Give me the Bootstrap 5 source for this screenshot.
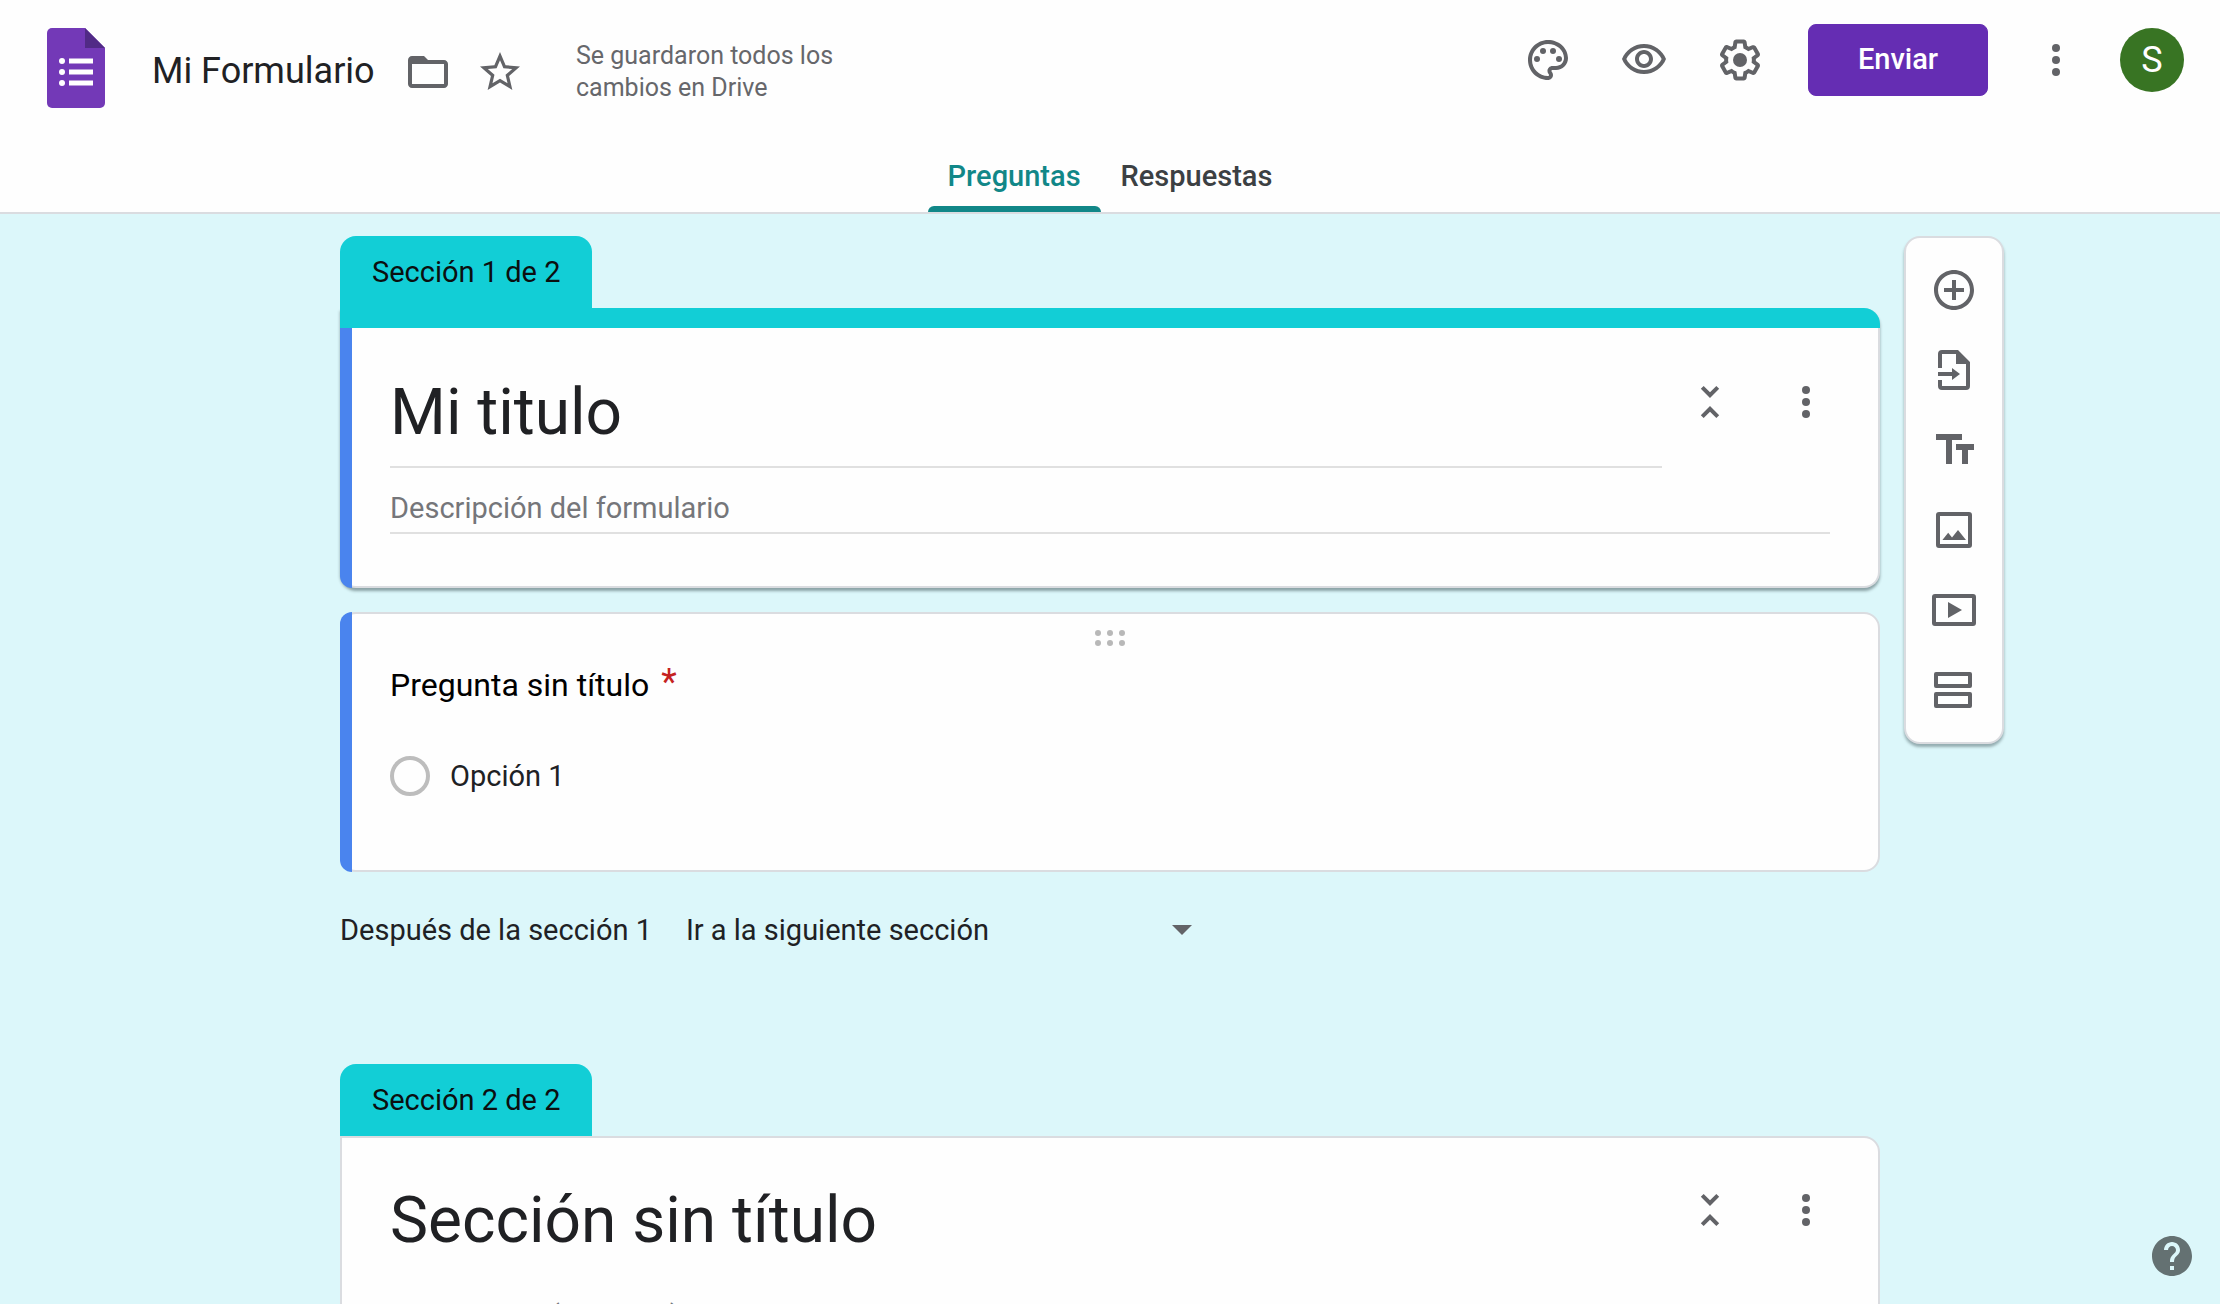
<!DOCTYPE html>
<html lang="es">
<head>
<meta charset="utf-8">
<meta name="viewport" content="width=device-width, initial-scale=1">
<title>Mi Formulario</title>
<link href="https://cdn.jsdelivr.net/npm/bootstrap@5.3.0/dist/css/bootstrap.min.css" rel="stylesheet">
<style>
  :root { --ink: #202124; --icon: #626367; --theme: #12ced6; --line: #dadce0; --active: #4a84ee; }
  body { font: 400 29px/40px Roboto, "Liberation Sans", sans-serif; color: var(--ink); background: #dcf7fa; }
  svg { display: block; flex: none; fill: currentColor; }
  .icon { width: 48px; height: 48px; }
  .icon-btn { width: 96px; color: var(--icon); background: none; border: 0; padding: 0; display: flex; align-items: center; justify-content: center; }
  .plain-field { display: block; border: 0; border-bottom: 2px solid transparent; border-radius: 0; background: none; padding: 0; color: inherit; min-width: 0; }
  .plain-field:focus { outline: 0; }

  .app-header { background: #fefefe; border-bottom: 2px solid var(--line); }
  .top-row { height: 140px; padding-left: 47px; padding-right: 36px; }
  .brand-group { padding-top: 28px; }
  .doc-group { height: 88px; margin-left: 47px; gap: 24px; }
  .doc-name { width: 228px; font-size: 36px; line-height: 44px; }
  .doc-group .icon-btn { width: 48px; }
  .save-note { max-width: 290px; font-size: 25px; line-height: 32px; color: #66676b; margin-left: 28px; }
  .tool-group { height: 72px; margin-top: 24px; }
  .btn-send { width: 180px; height: 72px; margin: 0 20px; border-radius: 8px; font-size: 29px; font-weight: 500; --bs-btn-bg: #652db3; --bs-btn-color: #fff; --bs-btn-border-color: #652db3; --bs-btn-hover-bg: #5a27a2; --bs-btn-hover-color: #fff; }
  .avatar { width: 64px; height: 64px; margin-left: 16px; border: 0; background: #387423; color: #fff; font-size: 36px; }
  .form-tabs .nav-link { position: relative; padding: 0 20px; line-height: 72px; font-weight: 500; color: #3c4043; }
  .form-tabs .nav-link.active { color: #118788; }
  .form-tabs .nav-link.active::after { content: ""; position: absolute; inset: auto 0 0; height: 6px; border-radius: 6px 6px 0 0; background: #118788; }

  .workspace { display: grid; grid-template-columns: minmax(0, 1fr) minmax(0, 1540px) minmax(148px, 1fr); padding-top: 22px; align-items: start; scrollbar-width: none; }
  .form-col { grid-column: 2; }
  .section-tag { display: inline-block; vertical-align: top; padding: 16px 32px; background: var(--theme); color: #0b0f10; border-radius: 16px 16px 0 0; }
  .panel { position: relative; background: #fefefe; border: 2px solid var(--line); border-radius: 16px; padding-left: 48px; }
  .panel-tagged { border-top-left-radius: 0; }
  .panel-themed { border-top: 0; box-shadow: 0 3px 3px rgba(40, 60, 65, .45); border-top-right-radius: 16px; padding-bottom: 52px; }
  .theme-bar { height: 20px; margin: 0 -2px 0 -50px; background: var(--theme); border-radius: 0 16px 0 0; }
  .panel-active::before { content: ""; position: absolute; left: -2px; top: -2px; bottom: -2px; width: 12px; background: var(--active); border-radius: 16px 0 0 16px; }
  .panel-themed.panel-active::before { top: 20px; border-radius: 0 0 0 16px; }
  .title-row { padding: 40px 24px 0 0; }
  .panel-plain .title-row { padding-top: 38px; }
  .title-row .icon-btn { height: 68px; }
  .form-title { font-size: 64px; line-height: 88px; height: 100px; padding-bottom: 10px; }
  .description-row { padding: 20px 48px 0 0; }
  .form-description { height: 46px; padding-bottom: 4px; }
  .form-description::placeholder { color: #75767a; opacity: 1; }
  .ruled { border-bottom-color: #e0e0e0; }
  .question { margin-top: 24px; padding-bottom: 74px; }
  .grip-row { margin-left: -48px; padding-top: 16px; }
  .grip { width: 30px; height: 16px; color: #b8b8b8; }
  .question-title { font-size: 32px; line-height: 44px; color: #000; margin: 17px 0 0; }
  .required { color: #c5221f; margin-left: 12px; font-size: 36px; line-height: 1; vertical-align: 2px; }
  .option { margin-top: 49px; gap: 20px; }
  .option .form-check-input { width: 40px; height: 40px; margin: 0; border: 4px solid #bdbdbd; background-color: transparent; }
  .after-row { margin: 30px 0 106px; gap: 34px; }
  .after-row .form-select { width: 530px; height: 56px; font-size: 29px; line-height: 40px; padding: 0 60px 0 0; border: 0; color: inherit; background-color: transparent; background-size: 20px 10px; background-position: right 24px center;
    background-image: url("data:image/svg+xml,%3csvg xmlns='http://www.w3.org/2000/svg' viewBox='0 0 20 10'%3e%3cpath fill='%23626367' d='M0 0h20L10 10z'/%3e%3c/svg%3e"); }
  .side-tools { width: 100px; margin-left: 24px; padding: 12px 0; background: #fefefe; border: 2px solid var(--line); border-radius: 16px; box-shadow: 0 3px 3px rgba(40, 60, 65, .4); }
  .side-tools .icon-btn { height: 80px; }
  .help-btn { position: fixed; right: 24px; bottom: 24px; width: 48px; color: #647172; }
</style>
<script src="https://cdn.jsdelivr.net/npm/bootstrap@5.3.0/dist/js/bootstrap.bundle.min.js" defer></script>
</head>
<body class="vh-100 d-flex flex-column overflow-hidden">

<svg class="d-none" aria-hidden="true">
  <symbol id="i-more" viewBox="0 0 24 24"><circle cx="12" cy="6" r="2"/><circle cx="12" cy="12" r="2"/><circle cx="12" cy="18" r="2"/></symbol>
  <symbol id="i-fold" viewBox="0 0 24 24"><path d="M7.41 18.59L8.83 20 12 16.83 15.17 20l1.41-1.41L12 14l-4.59 4.59zm9.18-13.18L15.17 4 12 7.17 8.83 4 7.41 5.41 12 10l4.59-4.59z"/></symbol>
</svg>

<header class="app-header flex-shrink-0">
  <div class="top-row d-flex align-items-start justify-content-between">
    <div class="brand-group d-flex align-items-start">
      <a href="#" aria-label="Formularios">
        <svg width="58" height="80" viewBox="0 0 58 80">
          <path fill="#7339b7" d="M5 0h33l20 20v55a5 5 0 0 1-5 5H5a5 5 0 0 1-5-5V5a5 5 0 0 1 5-5z"/>
          <path fill="#512a86" d="M38 0l20 20H38z"/>
          <g fill="#fff"><circle cx="15" cy="33" r="3"/><circle cx="15" cy="44" r="3"/><circle cx="15" cy="55" r="3"/><path d="M22 30.500h24v5H22zM22 41.500h24v5H22zM22 52.500h24v5H22z"/></g>
        </svg>
      </a>
      <div class="doc-group d-flex align-items-center">
        <input class="plain-field doc-name" type="text" value="Mi Formulario" aria-label="Nombre del documento">
        <button class="icon-btn" type="button" aria-label="Mover a carpeta"><svg class="icon" viewBox="0 0 24 24"><path d="M20 6h-8l-2-2H4c-1.100 0-1.990.9-1.990 2L2 18c0 1.100.9 2 2 2h16c1.100 0 2-.9 2-2V8c0-1.100-.9-2-2-2zm0 12H4V8h16v10z"/></svg></button>
        <button class="icon-btn" type="button" aria-label="Destacar"><svg class="icon" viewBox="0 0 24 24"><path d="M22 9.240l-7.190-.62L12 2 9.190 8.630 2 9.240l5.460 4.730L5.820 21 12 17.270 18.180 21l-1.630-7.030L22 9.240zM12 15.400l-3.760 2.270 1-4.280-3.320-2.880 4.380-.38L12 6.100l1.710 4.040 4.380.38-3.320 2.880 1 4.280L12 15.400z"/></svg></button>
        <div class="save-note">Se guardaron todos los cambios en Drive</div>
      </div>
    </div>
    <div class="tool-group d-flex align-items-center">
      <button class="icon-btn" type="button" aria-label="Personalizar tema"><svg class="icon" viewBox="0 0 24 24"><path d="M12 22C6.490 22 2 17.510 2 12S6.490 2 12 2s10 4.040 10 9c0 3.310-2.690 6-6 6h-1.770c-.28 0-.5.22-.5.5 0 .12.05.23.13.33.41.47.64 1.060.64 1.670 0 1.380-1.120 2.500-2.500 2.500zm0-18c-4.410 0-8 3.590-8 8s3.590 8 8 8c.28 0 .5-.22.5-.5 0-.16-.08-.28-.14-.35-.41-.46-.63-1.050-.63-1.650 0-1.380 1.120-2.500 2.500-2.500H16c2.210 0 4-1.790 4-4 0-3.860-3.590-7-8-7z"/><circle cx="6.500" cy="11.500" r="1.500"/><circle cx="9.500" cy="7.500" r="1.500"/><circle cx="14.500" cy="7.500" r="1.500"/><circle cx="17.500" cy="11.500" r="1.500"/></svg></button>
      <button class="icon-btn" type="button" aria-label="Vista previa"><svg class="icon" viewBox="0 0 24 24"><path d="M12 6c3.790 0 7.170 2.130 8.820 5.500C19.170 14.870 15.790 17 12 17s-7.170-2.130-8.820-5.500C4.830 8.130 8.210 6 12 6m0-2C7 4 2.730 7.110 1 11.500 2.730 15.890 7 19 12 19s9.270-3.110 11-7.500C21.270 7.110 17 4 12 4zm0 5c1.380 0 2.500 1.120 2.500 2.500S13.380 14 12 14s-2.500-1.120-2.500-2.500S10.620 9 12 9m0-2c-2.480 0-4.500 2.020-4.500 4.500S9.520 16 12 16s4.500-2.020 4.500-4.500S14.480 7 12 7z"/></svg></button>
      <button class="icon-btn" type="button" aria-label="Configuración"><svg class="icon" viewBox="0 0 24 24"><path d="M13.85 22.25h-3.7c-.74 0-1.36-.54-1.45-1.27l-.27-1.89c-.27-.14-.53-.29-.79-.46l-1.8.72c-.7.26-1.47-.03-1.81-.65L2.2 15.53c-.35-.66-.2-1.44.36-1.88l1.53-1.19c-.01-.15-.02-.3-.02-.46 0-.15.01-.31.02-.46l-1.52-1.19c-.59-.45-.74-1.26-.37-1.88l1.85-3.19c.34-.62 1.11-.9 1.79-.63l1.81.73c.26-.17.52-.32.78-.46l.27-1.91c.09-.7.71-1.25 1.44-1.25h3.7c.74 0 1.36.54 1.45 1.27l.27 1.89c.27.14.53.29.79.46l1.8-.72c.71-.26 1.48.03 1.82.65l1.84 3.18c.36.66.2 1.44-.36 1.88l-1.52 1.19c.01.15.02.3.02.46s-.01.31-.02.46l1.52 1.19c.56.45.72 1.23.37 1.86l-1.86 3.22c-.34.62-1.11.9-1.8.63l-1.8-.72c-.26.17-.52.32-.78.46l-.27 1.91c-.1.68-.72 1.22-1.46 1.22zm-3.23-2h2.76l.37-2.55.53-.22c.44-.18.88-.44 1.34-.78l.45-.34 2.38.96 1.38-2.4-2.03-1.58.07-.56c.03-.26.06-.51.06-.78s-.03-.53-.06-.78l-.07-.56 2.03-1.58-1.39-2.4-2.39.96-.45-.35c-.42-.32-.87-.58-1.33-.77l-.52-.22-.37-2.55h-2.76l-.37 2.55-.53.21c-.44.19-.88.44-1.34.79l-.45.33-2.38-.95-1.39 2.39 2.03 1.58-.07.56a7 7 0 0 0-.06.79c0 .26.02.53.06.78l.07.56-2.03 1.58 1.38 2.4 2.39-.96.45.35c.43.33.86.58 1.33.77l.53.22.38 2.55z"/><circle cx="12" cy="12" r="3.5"/></svg></button>
      <button class="btn btn-send" type="button">Enviar</button>
      <button class="icon-btn" type="button" aria-label="Más opciones"><svg class="icon"><use href="#i-more"/></svg></button>
      <button class="avatar rounded-circle p-0" type="button" aria-label="Cuenta">S</button>
    </div>
  </div>
  <nav class="nav form-tabs justify-content-center" aria-label="Vistas del formulario">
    <a class="nav-link active" href="#" aria-current="page">Preguntas</a>
    <a class="nav-link" href="#">Respuestas</a>
  </nav>
</header>

<main class="workspace flex-grow-1 overflow-auto">
  <div class="form-col">
    <section>
      <div class="section-tag">Sección 1 de 2</div>
      <div class="panel panel-tagged panel-themed panel-active">
        <div class="theme-bar"></div>
        <div class="title-row d-flex align-items-start">
          <input class="plain-field form-title ruled flex-grow-1" type="text" value="Mi titulo" aria-label="Título del formulario">
          <button class="icon-btn" type="button" aria-label="Contraer sección"><svg class="icon"><use href="#i-fold"/></svg></button>
          <button class="icon-btn" type="button" aria-label="Más opciones de la sección"><svg class="icon"><use href="#i-more"/></svg></button>
        </div>
        <div class="description-row">
          <input class="plain-field form-description ruled w-100" type="text" placeholder="Descripción del formulario" aria-label="Descripción del formulario">
        </div>
      </div>

      <div class="panel panel-active question">
        <div class="grip-row d-flex justify-content-center">
          <svg class="grip" viewBox="0 0 30 16"><circle cx="3" cy="3" r="3"/><circle cx="15" cy="3" r="3"/><circle cx="27" cy="3" r="3"/><circle cx="3" cy="13" r="3"/><circle cx="15" cy="13" r="3"/><circle cx="27" cy="13" r="3"/></svg>
        </div>
        <h2 class="question-title fw-normal">Pregunta sin título<span class="required">*</span></h2>
        <div class="option d-flex align-items-center">
          <input class="form-check-input" type="radio" name="pregunta" id="opcion1">
          <label for="opcion1">Opción 1</label>
        </div>
      </div>

      <div class="after-row d-flex align-items-center">
        <label for="siguiente">Después de la sección 1</label>
        <select class="form-select" id="siguiente">
          <option>Ir a la siguiente sección</option>
        </select>
      </div>
    </section>

    <section>
      <div class="section-tag">Sección 2 de 2</div>
      <div class="panel panel-tagged panel-plain">
        <div class="title-row d-flex align-items-start">
          <input class="plain-field form-title flex-grow-1" type="text" value="Sección sin título" aria-label="Título de la sección">
          <button class="icon-btn" type="button" aria-label="Contraer sección"><svg class="icon"><use href="#i-fold"/></svg></button>
          <button class="icon-btn" type="button" aria-label="Más opciones de la sección"><svg class="icon"><use href="#i-more"/></svg></button>
        </div>
        <div class="description-row">
          <input class="plain-field form-description w-100" type="text" placeholder="Descripción (opcional)" aria-label="Descripción de la sección">
        </div>
      </div>
    </section>
  </div>

  <aside class="side-tools d-flex flex-column align-items-center" aria-label="Agregar elementos">
    <button class="icon-btn" type="button" aria-label="Agregar pregunta"><svg class="icon" viewBox="0 0 24 24"><path d="M13 7h-2v4H7v2h4v4h2v-4h4v-2h-4V7zm-1-5C6.480 2 2 6.480 2 12s4.480 10 10 10 10-4.480 10-10S17.520 2 12 2zm0 18c-4.410 0-8-3.590-8-8s3.590-8 8-8 8 3.590 8 8-3.590 8-8 8z"/></svg></button>
    <button class="icon-btn" type="button" aria-label="Importar preguntas"><svg class="icon" viewBox="0 0 24 24"><path d="M4 11V4a2 2 0 0 1 2-2h8l6 6v12a2 2 0 0 1-2 2H6a2 2 0 0 1-2-2v-3h2v3h12V9h-5V4H6v7zM4 13h7v-2l4 3-4 3v-2H4z"/></svg></button>
    <button class="icon-btn" type="button" aria-label="Agregar título y descripción"><svg class="icon" viewBox="0 0 24 24"><path d="M3 4v3h5v12h3V7h5V4zM22 9h-9v3h3v7h3v-7h3z"/></svg></button>
    <button class="icon-btn" type="button" aria-label="Agregar imagen"><svg class="icon" viewBox="0 0 24 24"><path fill-rule="evenodd" d="M4.500 3h15A1.500 1.500 0 0 1 21 4.500v15a1.500 1.500 0 0 1-1.500 1.500h-15A1.500 1.500 0 0 1 3 19.500v-15A1.500 1.500 0 0 1 4.500 3zM5 5v14h14V5zM6.200 17H18l-4-5-3 3.800L9.100 13.400z"/></svg></button>
    <button class="icon-btn" type="button" aria-label="Agregar video"><svg class="icon" viewBox="0 0 24 24"><path fill-rule="evenodd" d="M2.500 4h19A1.500 1.500 0 0 1 23 5.500v13a1.500 1.500 0 0 1-1.500 1.500h-19A1.500 1.500 0 0 1 1 18.500v-13A1.500 1.500 0 0 1 2.500 4zM3 6v12h18V6zM9 8v8l7-4z"/></svg></button>
    <button class="icon-btn" type="button" aria-label="Agregar sección"><svg class="icon" viewBox="0 0 24 24"><path fill-rule="evenodd" d="M3 3h17a1 1 0 0 1 1 1v6a1 1 0 0 1-1 1H3a1 1 0 0 1-1-1V4a1 1 0 0 1 1-1zM4 5v4h15V5zM3 13h17a1 1 0 0 1 1 1v6a1 1 0 0 1-1 1H3a1 1 0 0 1-1-1v-6a1 1 0 0 1 1-1zM4 15v4h15v-4z"/></svg></button>
  </aside>
</main>

<button class="icon-btn help-btn" type="button" aria-label="Ayuda"><svg class="icon" viewBox="0 0 24 24"><path d="M12 2C6.480 2 2 6.480 2 12s4.480 10 10 10 10-4.480 10-10S17.520 2 12 2zm1 17h-2v-2h2v2zm2.070-7.750l-.9.92C13.450 12.900 13 13.500 13 15h-2v-.5c0-1.100.45-2.100 1.170-2.830l1.240-1.260c.37-.36.59-.86.59-1.410 0-1.100-.9-2-2-2s-2 .9-2 2H8c0-2.210 1.790-4 4-4s4 1.790 4 4c0 .88-.36 1.680-.93 2.250z"/></svg></button>

</body>
</html>
